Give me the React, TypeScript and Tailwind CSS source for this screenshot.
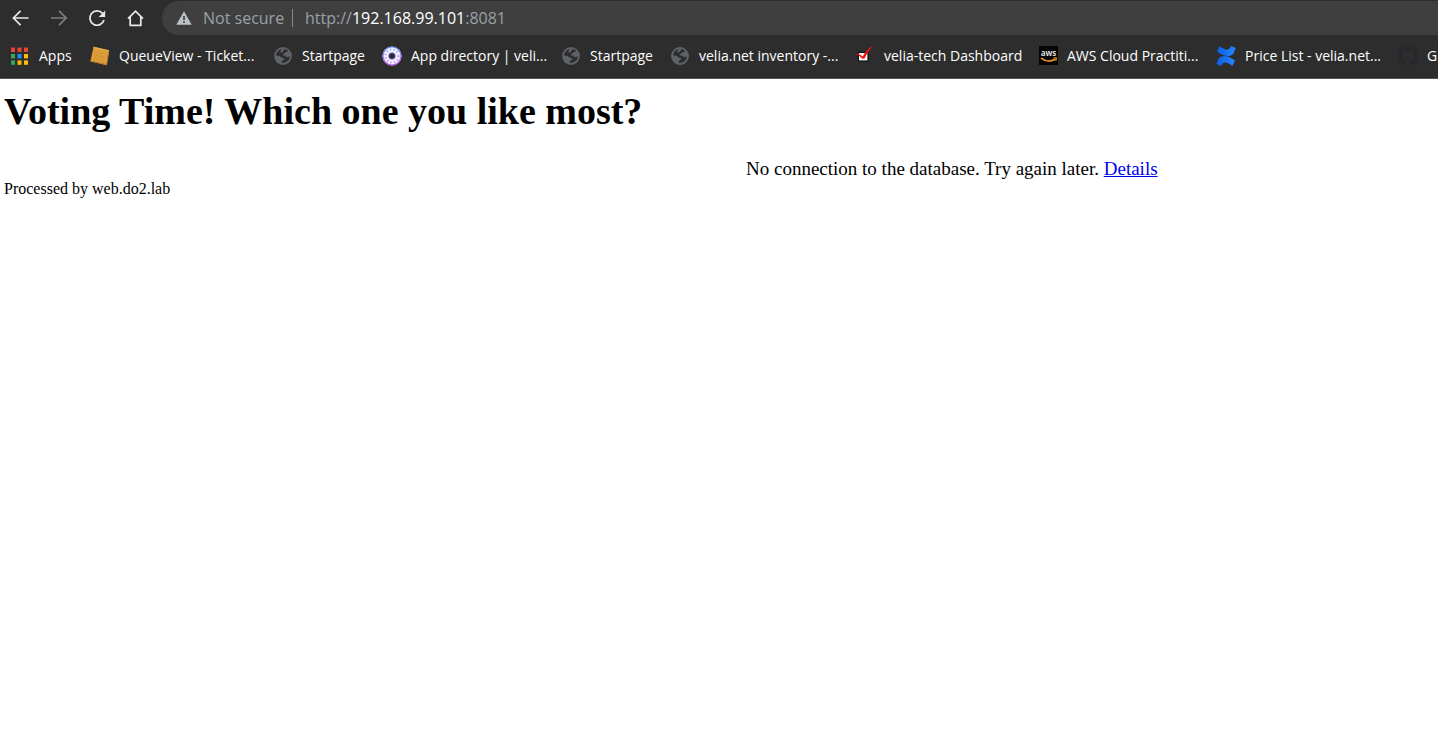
import type { ReactNode } from "react";

function Globe() {
  return (
    <svg viewBox="0 0 18 18" className="size-[18px]" aria-hidden="true">
      <circle cx="9" cy="9" r="8.9" fill="#5f6368" />
      <path
        d="M10.8 2 C12.2 2.4 13.4 3.1 14.2 4 L13 5 L11 5.2 L10.2 6.6 L8.6 7.4 L9.4 8.4 L11.6 8.8 L12.6 10.2 L16 9.6 C15.6 13 12.8 15.9 9 16 L7.6 15.6 L8 13.8 L10 12.8 L9.8 11 L7.4 10.4 L5.6 9 L2 8.6 C2.4 5 4.6 2.8 7.6 2.1 L6.4 4.4 L6.8 6 L9 4.6 Z"
        fill="#2d2d2d"
      />
    </svg>
  );
}

function AppsGrid() {
  const colors = ["#ea4335", "#ea4335", "#ea4335", "#34a853", "#1a8cff", "#fbbc05", "#34a853", "#fbbc05", "#fbbc05"];
  return (
    <svg viewBox="0 0 18 18" className="size-[18px]" aria-hidden="true">
      {colors.map((c, i) => (
        <rect key={i} x={(i % 3) * 6.5} y={0.6 + Math.floor(i / 3) * 6.4} width="4" height="4.4" fill={c} />
      ))}
    </svg>
  );
}

function Ticket() {
  return (
    <svg viewBox="0 0 20 20" className="size-5" aria-hidden="true">
      <path d="M3.6 .8 L19 4.2 L16.6 19.2 L.4 15.4 Z" fill="#dc9d3a" />
      <path d="M3.6 .8 L19 4.2 L18.7 5.5 L3.4 2.2 Z" fill="#e3aa4c" />
      <path d="M.5 14.8 L16.7 18.5 L18.7 6" fill="none" stroke="#b87828" />
      <path d="M4.5 6 L15.5 8.2 M4 9 L15 11.4 M3.5 12 L14 14.6" stroke="#d29233" />
    </svg>
  );
}

function Donut() {
  return (
    <svg viewBox="0 0 20 20" className="size-5" aria-hidden="true">
      <defs>
        <linearGradient id="donut" x1="0" y1="0" x2="0" y2="1">
          <stop offset="0" stopColor="#3b82f6" />
          <stop offset=".5" stopColor="#8b5cf6" />
          <stop offset="1" stopColor="#b23be0" />
        </linearGradient>
      </defs>
      <circle cx="10" cy="10" r="9.6" fill="#f4efff" />
      <circle cx="10" cy="10" r="9" fill="none" stroke="url(#donut)" strokeWidth="1.2" opacity=".85" />
      <circle cx="10" cy="10" r="6.6" fill="none" stroke="url(#donut)" strokeWidth="2" strokeDasharray="1.2 2.4" opacity=".6" />
      <circle cx="10" cy="10" r="3.8" fill="#9a8ae0" />
      <circle cx="10" cy="10" r="2.8" fill="#25252d" />
    </svg>
  );
}

function RedCheck() {
  return (
    <svg viewBox="0 0 20 20" className="size-5" aria-hidden="true">
      <rect x="3.4" y="6.4" width="9.6" height="8.6" fill="#fff" stroke="#111" strokeWidth="1.2" />
      <path d="M1 8.2 L3.4 7.4 L7.8 10.4 C10 6 13 2.2 17.6 .2 C14.2 4 11.4 8.6 9.6 12.4 L7.2 12.8 L4 9.6 Z" fill="#e81313" />
    </svg>
  );
}

function Aws() {
  return (
    <svg viewBox="0 0 19 19" className="size-[19px]" aria-hidden="true">
      <rect width="19" height="19" fill="#050505" />
      <text x="9.5" y="10.2" textAnchor="middle" fontSize="8" fontWeight="700" fontFamily="Open Sans, sans-serif" fill="#ddd">
        aws
      </text>
      <path d="M2 12.2 C6.5 15.6 12 15.8 16.6 13" fill="none" stroke="#f7981f" strokeWidth="1.5" />
      <path d="M14.4 12 L17.6 11.8 L16.8 15" fill="none" stroke="#f7981f" />
    </svg>
  );
}

function Confluence() {
  return (
    <svg viewBox="0 0 20 20" className="size-5" aria-hidden="true">
      <defs>
        <linearGradient id="conf" x1="0" y1="0" x2="1" y2="0">
          <stop offset="0" stopColor="#0b5fe0" />
          <stop offset="1" stopColor="#2684ff" />
        </linearGradient>
      </defs>
      <path d="M3.4 .6 L1.2 4.8 C1 5.3 1.1 5.8 1.5 6 C8 10.4 14.5 12 17.6 7 L19.4 2.8 C19.6 2.3 19.4 1.9 19 1.7 L15.4 .1 C12.6 4.8 9.5 4.6 4.2 .5 Z" fill="url(#conf)" />
      <path d="M16.6 19.4 L18.8 15.2 C19 14.7 18.9 14.2 18.5 14 C12 9.6 5.5 8 2.4 13 L.6 17.2 C.4 17.7 .6 18.1 1 18.3 L4.6 19.9 C7.4 15.2 10.5 15.4 15.8 19.5 Z" fill="url(#conf)" />
    </svg>
  );
}

function GitHub() {
  return (
    <svg viewBox="0 0 16 16" className="size-5" aria-hidden="true">
      <path
        fill="#24292e"
        d="M8 0C3.58 0 0 3.58 0 8c0 3.54 2.29 6.53 5.47 7.59.4.07.55-.17.55-.38 0-.19-.01-.82-.01-1.49-2.01.37-2.53-.49-2.69-.94-.09-.23-.48-.94-.82-1.13-.28-.15-.68-.52-.01-.53.63-.01 1.08.58 1.23.82.72 1.21 1.87.87 2.33.66.07-.52.28-.87.51-1.07-1.78-.2-3.64-.89-3.64-3.95 0-.87.31-1.59.82-2.15-.08-.2-.36-1.02.08-2.12 0 0 .67-.21 2.2.82.64-.18 1.32-.27 2-.27s1.36.09 2 .27c1.53-1.04 2.2-.82 2.2-.82.44 1.1.16 1.92.08 2.12.51.56.82 1.27.82 2.15 0 3.07-1.87 3.75-3.65 3.95.29.25.54.73.54 1.48 0 1.07-.01 1.93-.01 2.2 0 .21.15.46.55.38A8.01 8.01 0 0 0 16 8c0-4.42-3.58-8-8-8z"
      />
    </svg>
  );
}

const bookmarks: { label: string; icon: ReactNode; width: string }[] = [
  { label: "Apps", icon: <AppsGrid />, width: "w-20" },
  { label: "QueueView - Ticket...", icon: <Ticket />, width: "w-[183px]" },
  { label: "Startpage", icon: <Globe />, width: "w-[109px]" },
  { label: "App directory | veli...", icon: <Donut />, width: "w-[179px]" },
  { label: "Startpage", icon: <Globe />, width: "w-[109px]" },
  { label: "velia.net inventory -...", icon: <Globe />, width: "w-[185px]" },
  { label: "velia-tech Dashboard", icon: <RedCheck />, width: "w-[183px]" },
  { label: "AWS Cloud Practiti...", icon: <Aws />, width: "w-[178px]" },
  { label: "Price List - velia.net...", icon: <Confluence />, width: "w-[182px]" },
  { label: "GitHub", icon: <GitHub />, width: "w-20" },
];

function NavButton({ label, color, children }: { label: string; color: string; children: ReactNode }) {
  return (
    <button type="button" aria-label={label} className={`flex size-[22px] items-center justify-center ${color}`}>
      <svg viewBox="0 0 22 22" className="size-[22px]" fill="none" stroke="currentColor" strokeWidth="1.7">
        {children}
      </svg>
    </button>
  );
}

export default function App() {
  return (
    <div className="min-h-screen overflow-x-hidden bg-white">
      <header className="border-b border-[#555555] bg-[#2d2d2d] font-['Open_Sans',sans-serif]">
        <div className="flex h-[35px] items-stretch pt-px pl-[10px]">
          <nav className="flex shrink-0 items-center gap-4 pr-4 pb-px" aria-label="Navigation">
            <NavButton label="Back" color="text-[#e8e8e8]">
              <path d="M18.5 11 H4 M10.6 3.8 L3.4 11 L10.6 18.2" />
            </NavButton>
            <NavButton label="Forward" color="text-[#7c7c7c]">
              <path d="M3 11 H18 M11 3.8 L18.2 11 L11 18.2" />
            </NavButton>
            <NavButton label="Reload" color="text-[#e8e8e8]">
              <path d="M16.6 6.4 A7.2 7.2 0 1 0 18 13" />
              <path d="M19.2 3.4 V10 H12.6 Z" fill="currentColor" stroke="none" />
            </NavButton>
            <NavButton label="Home" color="text-[#e8e8e8]">
              <path d="M4 11.6 L11.5 4.2 L19 11.6 M6.2 10 V18.4 H16.8 V10" />
            </NavButton>
          </nav>
          <div className="flex grow items-center rounded-l-full bg-[#3f3f3f] pl-[14px] text-base">
            <svg viewBox="0 0 16 14" className="h-[14px] w-4" aria-hidden="true">
              <path d="M8 .3 L15.7 13.7 H.3 Z" fill="#bdc1c6" />
              <path d="M8 5 V9 M8 10.3 V12" stroke="#3f3f3f" strokeWidth="1.7" />
            </svg>
            <span className="ml-[11px] w-[90px] shrink-0 border-r border-[#85888c] leading-[18px] whitespace-nowrap text-[#9aa0a6]">Not secure</span>
            <span className="ml-3 whitespace-nowrap text-[#9aa0a6]">
              http://<span className="text-white">192.168.99.101</span>:8081
            </span>
          </div>
        </div>
        <nav className="flex h-[43px] items-center overflow-hidden pb-[2px] pl-[10px]" aria-label="Bookmarks">
          {bookmarks.map((b, i) => (
            <a key={i} href="#" className={`flex shrink-0 items-center gap-[9px] text-sm whitespace-nowrap text-white ${b.width}`}>
              <span className="flex w-5 shrink-0 justify-center">{b.icon}</span>
              {b.label}
            </a>
          ))}
        </nav>
      </header>
      <main className="px-1 pt-2 font-['Liberation_Serif',serif] text-black">
        <h1 className="text-[38px] leading-[48px] font-bold">Voting Time! Which one you like most?</h1>
        <p className="mt-6 pl-[742px] text-[19px] leading-5 whitespace-nowrap">
          No connection to the database. Try again later.{" "}
          <a href="#" className="text-[#0000ee] underline">
            Details
          </a>
        </p>
        <p className="text-base leading-5">Processed by web.do2.lab</p>
      </main>
    </div>
  );
}
